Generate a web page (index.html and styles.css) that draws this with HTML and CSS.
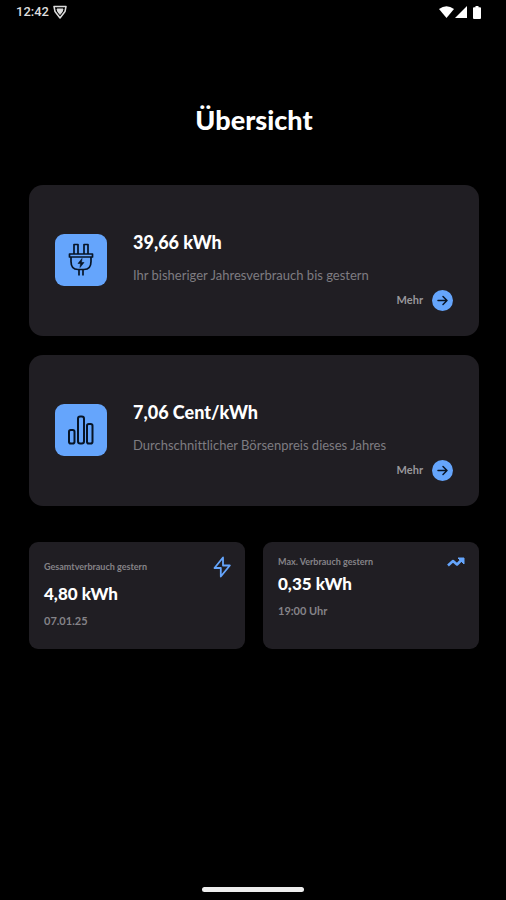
FILE: index.html
```html
<!DOCTYPE html>
<html lang="de">
<head>
<meta charset="utf-8">
<meta name="viewport" content="width=device-width, initial-scale=1">
<title>Übersicht</title>
<link rel="stylesheet" href="styles.css">
</head>
<body>
<header class="status">
  <div class="status-group">
    <span>12:42</span>
    <svg width="14" height="14" viewBox="0 0 14 14" fill="none" stroke="#ddd" stroke-width="1.5" stroke-linejoin="round"><path d="M1 1.500h12l-1 5-5 6.500L2 6.500z"/><path d="M4 4h6L9 7 7 9.500 5 7z" fill="#ddd" stroke-width="1"/></svg>
  </div>
  <div class="status-group icons">
    <svg width="15" height="12" viewBox="0 0 15 12" fill="#fff"><path d="M0 3Q7.500-2.500 15 3L7.500 12z"/></svg>
    <svg width="12" height="12" viewBox="0 0 12 12" fill="#fff"><path d="M12 0v12H0z"/></svg>
    <svg class="battery" width="8" height="13" viewBox="0 0 8 13" fill="#fff"><path d="M2.500 0h3v1.300H7q1 0 1 1V12q0 1-1 1H1q-1 0-1-1V2.300q0-1 1-1h1.500z"/></svg>
  </div>
</header>
<main class="page">
  <h1>Übersicht</h1>
  <section class="card">
    <div class="tile">
      <svg width="26" height="34" viewBox="0 0 26 34" fill="none" stroke="#071425" stroke-width="1.7" stroke-linejoin="round"><path d="M6 11V1.500h4V11M16 11V1.500h4V11M1.500 11h23v3h-23zM3 14v4.500q0 8 7 8h6q7 0 7-8V14M11 27v5.500M15 27v5.500"/><path d="M14 15.500L10 20.500h2.500L12 24.500l4-5h-2.500z" fill="#071425" stroke-width=".6"/></svg>
    </div>
    <div class="info">
      <h2>39,66 kWh</h2>
      <p>Ihr bisheriger Jahresverbrauch bis gestern</p>
      <a class="more" href="#verbrauch">Mehr
        <svg width="21" height="21" viewBox="0 0 21 21" fill="none" stroke="#071425" stroke-width="1.500" stroke-linecap="round" stroke-linejoin="round"><circle cx="10.500" cy="10.500" r="10.500" fill="#65a5fc" stroke="none"/><path d="M6 10.500h9M11 6.500l4 4-4 4"/></svg>
      </a>
    </div>
  </section>
  <section class="card">
    <div class="tile">
      <svg width="26" height="30" viewBox="0 0 26 30" fill="none" stroke="#071425" stroke-width="2"><rect x="1" y="15" width="5.500" height="13.500" rx="1.800"/><rect x="10" y="1.500" width="6" height="27" rx="2.200"/><rect x="19" y="9" width="5.500" height="19.500" rx="1.800"/></svg>
    </div>
    <div class="info">
      <h2>7,06 Cent/kWh</h2>
      <p>Durchschnittlicher Börsenpreis dieses Jahres</p>
      <a class="more" href="#preis">Mehr
        <svg width="21" height="21" viewBox="0 0 21 21" fill="none" stroke="#071425" stroke-width="1.500" stroke-linecap="round" stroke-linejoin="round"><circle cx="10.500" cy="10.500" r="10.500" fill="#65a5fc" stroke="none"/><path d="M6 10.500h9M11 6.500l4 4-4 4"/></svg>
      </a>
    </div>
  </section>
  <div class="stats">
    <section class="stat">
      <div class="stat-head tall">
        <h3>Gesamtverbrauch gestern</h3>
        <svg width="18" height="22" viewBox="0 0 18 22" fill="none" stroke="#65a5fc" stroke-width="1.800" stroke-linejoin="round"><path d="M10 1.500L1.500 12h6.300v8.500L16.800 9.500H10z"/></svg>
      </div>
      <strong>4,80 kWh</strong>
      <p>07.01.25</p>
    </section>
    <section class="stat">
      <div class="stat-head">
        <h3>Max. Verbrauch gestern</h3>
        <svg width="18" height="10" viewBox="0 0 18 10" fill="none" stroke="#65a5fc" stroke-width="2.600" stroke-linejoin="round"><path d="M1 8.500l5-4.500 4 3.500L15 2.500"/><path d="M11 1h6v6z" fill="#65a5fc" stroke-width="1"/></svg>
      </div>
      <strong>0,35 kWh</strong>
      <p>19:00 Uhr</p>
    </section>
  </div>
</main>
<footer class="home"><div class="home-bar"></div></footer>
</body>
</html>
```
FILE: styles.css
```css
* { box-sizing: border-box; }
body {
  margin: 0;
  min-height: 100vh;
  display: flex;
  flex-direction: column;
  background: #000;
  color: #fff;
  font-family: Lato, "Open Sans", sans-serif;
  font-variant-ligatures: none;
}
h1, h2, h3, p { margin: 0; }
svg { display: block; flex: none; }
.status {
  display: flex;
  justify-content: space-between;
  align-items: center;
  height: 24px;
  padding: 0 25px 0 16px;
  font: 500 13px/16px Roboto, sans-serif;
  color: #ddd;
}
.status-group { display: flex; align-items: center; gap: 4px; }
.icons { gap: 1px; }
.battery { margin-left: 5px; }
.page { padding: 0 27px 0 29px; }
h1 {
  margin: 80px 0 49px;
  font-size: 27px;
  line-height: 32px;
  font-weight: 900;
  text-align: center;
}
.card {
  display: flex;
  gap: 26px;
  margin-bottom: 19px;
  padding: 45px 26px 25px;
  border-radius: 14px;
  background: #201e23;
}
.tile {
  display: flex;
  align-items: center;
  justify-content: center;
  flex: none;
  width: 52px;
  height: 52px;
  margin-top: 4px;
  border-radius: 9px;
  background: #65a5fc;
}
.info { flex: 1; display: flex; flex-direction: column; }
h2 { font-size: 18px; line-height: 24px; font-weight: 900; }
.info p {
  margin: 11px 0 4px;
  font-size: 13px;
  line-height: 20px;
  color: #7e7c81;
}
.more {
  display: flex;
  align-items: center;
  align-self: flex-end;
  gap: 9px;
  font-size: 11px;
  line-height: 22px;
  font-weight: 700;
  color: #99979b;
  text-decoration: none;
}
.stats {
  display: grid;
  grid-template-columns: 1fr 1fr;
  gap: 18px;
  margin-top: 36px;
}
.stat {
  min-height: 107px;
  padding: 14px 14px 14px 15px;
  border-radius: 9px;
  background: #201e23;
}
.stat-head {
  display: flex;
  align-items: center;
  justify-content: space-between;
  height: 12px;
}
.stat-head.tall { height: 22px; }
h3 { font-size: 9px; line-height: 12px; font-weight: 700; color: #858388; }
.stat strong {
  display: block;
  margin: 5px 0 8px;
  font-size: 17px;
  line-height: 22px;
  font-weight: 900;
}
.stat p { font-size: 11px; line-height: 16px; font-weight: 700; color: #858388; }
.home { margin-top: auto; padding: 8px; }
.home-bar {
  width: 102px;
  height: 5px;
  margin: 0 auto;
  border-radius: 3px;
  background: #eee;
}
```
